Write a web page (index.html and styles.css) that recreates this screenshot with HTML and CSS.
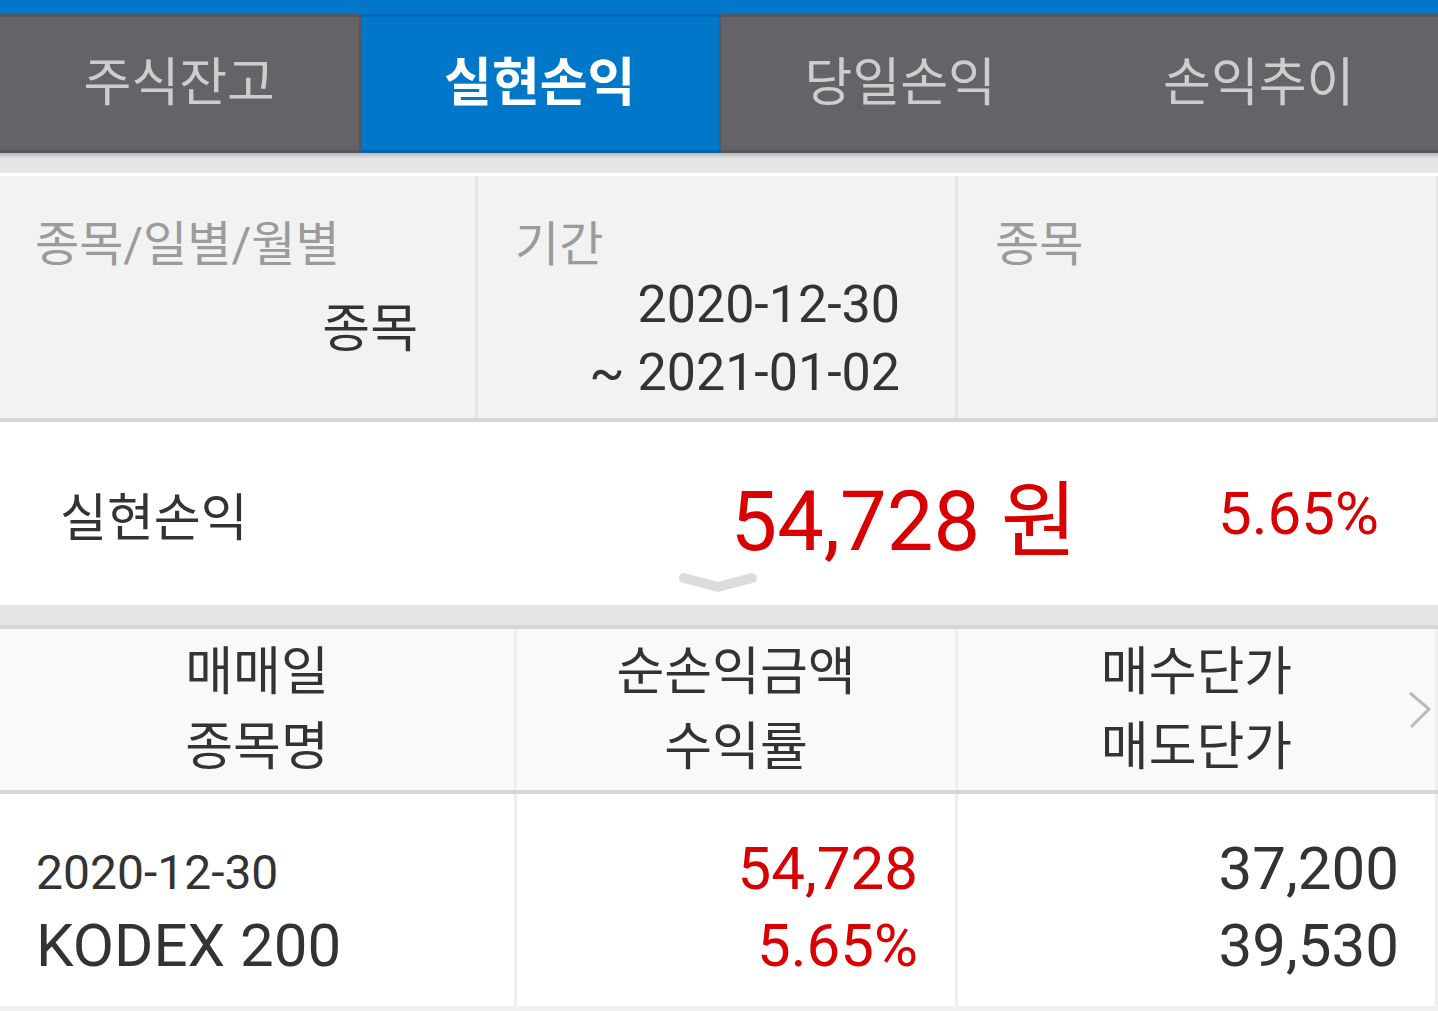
FILE: index.html
```html
<!DOCTYPE html>
<html lang="ko">
<head>
<meta charset="utf-8">
<title>실현손익</title>
<link rel="stylesheet" href="styles.css">
</head>
<body>
<div class="topbar"></div>
<nav class="tabs">
  <div class="tab">주식잔고</div>
  <div class="tab active">실현손익</div>
  <div class="tab">당일손익</div>
  <div class="tab">손익추이</div>
</nav>
<div class="band"></div>
<section class="filters">
  <div class="filter f1">
    <div class="f-label">종목/일별/월별</div>
    <div class="f-value single">종목</div>
  </div>
  <div class="filter f2">
    <div class="f-label">기간</div>
    <div class="f-value dates">
      <div>2020-12-30</div>
      <div>~ 2021-01-02</div>
    </div>
  </div>
  <div class="filter f3">
    <div class="f-label">종목</div>
  </div>
</section>
<section class="summary">
  <div class="sum-label">실현손익</div>
  <div class="sum-amount">54,728 원</div>
  <div class="sum-rate">5.65%</div>
  <svg class="chev" width="90" height="32" viewBox="0 0 90 32"><polyline points="11,12 45,21 79,12" fill="none" stroke="#dcdcdc" stroke-width="10" stroke-linecap="round" stroke-linejoin="round"/></svg>
</section>
<div class="gap"></div>
<section class="thead">
  <div class="th"><div>매매일</div><div>종목명</div></div>
  <div class="th"><div>순손익금액</div><div>수익률</div></div>
  <div class="th"><div>매수단가</div><div>매도단가</div></div>
  <svg class="more" width="30" height="42" viewBox="0 0 30 42"><polyline points="6,4 25,20 7,38" fill="none" stroke="#b9b9b9" stroke-width="3"/></svg>
</section>
<section class="trow">
  <div class="td c1"><div class="date">2020-12-30</div><div class="name">KODEX 200</div></div>
  <div class="td c2 red"><div class="num">54,728</div><div class="num">5.65%</div></div>
  <div class="td c3"><div class="num">37,200</div><div class="num">39,530</div></div>
</section>
</body>
</html>
```
FILE: styles.css
```css
html, body {
  margin: 0;
  padding: 0;
}
body {
  width: 1438px;
  height: 1011px;
  overflow: hidden;
  background: #f0f0f0;
  font-family: Roboto, "Noto Sans CJK KR", sans-serif;
  color: #333333;
}

.topbar {
  height: 14px;
  background: #0077c8;
}

.tabs {
  display: flex;
  height: 139px;
  background: #646368;
}
.tab {
  flex: 1 1 0;
  box-sizing: border-box;
  border-top: 3px solid #56555b;
  border-bottom: 3px solid #56555b;
  text-align: center;
  line-height: 133px;
  font-size: 52px;
  color: #cdcdcd;
}
.tab.active {
  background: #0077c8;
  color: #ffffff;
  font-weight: 700;
  border-top-color: #006ab6;
  border-bottom-color: #0064a8;
  border-left: 2px solid #56555b;
  border-right: 2px solid #56555b;
}

.band {
  height: 23px;
  background: linear-gradient(to bottom, #b8b8b8 0, #e6e6e6 6px, #e6e6e6 20px, #ffffff 20px);
}

.filters {
  display: grid;
  grid-template-columns: 475px 477px 478px;
  column-gap: 3px;
  padding-right: 2px;
  height: 242px;
  background: #e6e6e6;
  border-bottom: 4px solid #d6d6d6;
}
.filter {
  background: #f2f2f2;
  padding-top: 41px;
  padding-left: 37px;
}
.f1 { padding-left: 35px; padding-right: 57px; }
.f2 { padding-right: 55px; }
.f-label {
  font-size: 48px;
  line-height: 56px;
  color: #9b9b9b;
}
.f-value {
  text-align: right;
  color: #333333;
}
.f-value.single {
  font-size: 52px;
  line-height: 68px;
  margin-top: 23px;
}
.f-value.dates {
  font-size: 52px;
  line-height: 68px;
  margin-top: -2px;
}

.summary {
  position: relative;
  display: flex;
  align-items: center;
  height: 183px;
  box-sizing: border-box;
  padding: 0 59px 0 60px;
  background: #ffffff;
}
.sum-label {
  flex: 1;
  font-size: 51px;
  color: #333333;
}
.sum-amount {
  font-size: 83px;
  color: #d80000;
}
.sum-rate {
  width: 302px;
  text-align: right;
  font-size: 60px;
  color: #d80000;
}
.chev {
  position: absolute;
  left: 673px;
  top: 144px;
}

.gap {
  height: 20px;
  background: #e5e5e5;
  border-bottom: 4px solid #d5d5d5;
}

.thead, .trow {
  display: grid;
  grid-template-columns: 514px 438px 477px;
  column-gap: 3px;
  padding-right: 3px;
  background: #eeeeee;
}
.thead {
  position: relative;
  border-bottom: 4px solid #d6d6d6;
}
.th {
  height: 161px;
  background: #f9f9f9;
  display: flex;
  flex-direction: column;
  justify-content: center;
  align-items: center;
  font-size: 52px;
  line-height: 75px;
  color: #333333;
}
.more {
  position: absolute;
  left: 1404px;
  top: 60px;
}

.td {
  height: 212px;
  box-sizing: border-box;
  background: #ffffff;
  padding-top: 36px;
}
.c1 { padding-left: 36px; }
.c2 { text-align: right; padding-right: 37px; }
.c3 { text-align: right; padding-right: 36px; }
.red { color: #d80000; }
.num {
  font-size: 60px;
  line-height: 77px;
}
.date {
  font-size: 48px;
  line-height: 69px;
  padding-top: 8px;
}
.name {
  font-size: 60px;
  line-height: 77px;
}
```
